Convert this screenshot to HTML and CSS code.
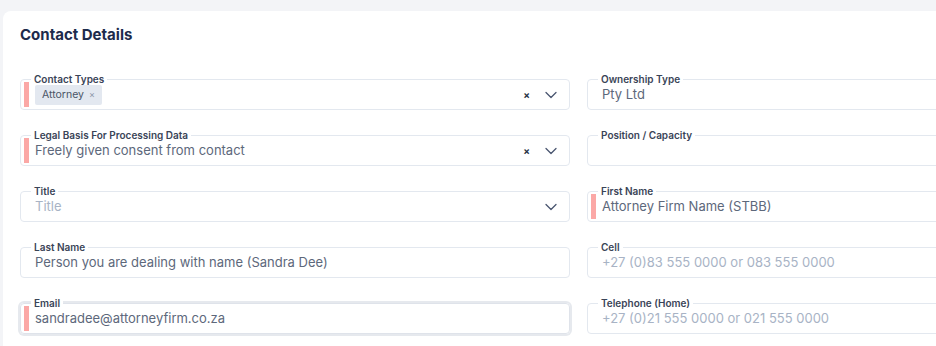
FILE: index.html
```html
<!DOCTYPE html>
<html lang="en">
<head>
    <meta charset="UTF-8">
    <meta name="viewport" content="width=device-width, initial-scale=1.0">
    <title>Contact Details</title>
    <link rel="stylesheet" href="styles.css">
</head>
<body>

    <!-- Contact details card -->
    <div class="card">
        <h2 class="card-title">Contact Details</h2>

        <div class="form-grid">
            <!-- Row 1 -->
            <div class="field required">
                <span class="field-label">Contact Types</span>
                <div class="field-value">
                    <span class="chip">Attorney <span class="chip-x">&times;</span></span>
                </div>
                <span class="clear">&times;</span>
                <svg class="chevron" width="12" height="8" viewBox="0 0 12 8"><path d="M1 1.5l5 5 5-5" fill="none" stroke="#4a5670" stroke-width="1.3" stroke-linecap="round" stroke-linejoin="round"/></svg>
            </div>
            <div class="field">
                <span class="field-label">Ownership Type</span>
                <div class="field-value">Pty Ltd</div>
            </div>

            <!-- Row 2 -->
            <div class="field required">
                <span class="field-label">Legal Basis For Processing Data</span>
                <div class="field-value">Freely given consent from contact</div>
                <span class="clear">&times;</span>
                <svg class="chevron" width="12" height="8" viewBox="0 0 12 8"><path d="M1 1.5l5 5 5-5" fill="none" stroke="#4a5670" stroke-width="1.3" stroke-linecap="round" stroke-linejoin="round"/></svg>
            </div>
            <div class="field">
                <span class="field-label">Position / Capacity</span>
                <div class="field-value"></div>
            </div>

            <!-- Row 3 -->
            <div class="field">
                <span class="field-label">Title</span>
                <div class="field-value placeholder">Title</div>
                <svg class="chevron" width="12" height="8" viewBox="0 0 12 8"><path d="M1 1.5l5 5 5-5" fill="none" stroke="#4a5670" stroke-width="1.3" stroke-linecap="round" stroke-linejoin="round"/></svg>
            </div>
            <div class="field required">
                <span class="field-label">First Name</span>
                <div class="field-value">Attorney Firm Name (STBB)</div>
            </div>

            <!-- Row 4 -->
            <div class="field">
                <span class="field-label">Last Name</span>
                <div class="field-value">Person you are dealing with name (Sandra Dee)</div>
            </div>
            <div class="field">
                <span class="field-label">Cell</span>
                <div class="field-value placeholder">+27 (0)83 555 0000 or 083 555 0000</div>
            </div>

            <!-- Row 5 -->
            <div class="field required focused">
                <span class="field-label">Email</span>
                <div class="field-value">sandradee@attorneyfirm.co.za</div>
            </div>
            <div class="field">
                <span class="field-label">Telephone (Home)</span>
                <div class="field-value placeholder">+27 (0)21 555 0000 or 021 555 0000</div>
            </div>
        </div>
    </div>

</body>
</html>
```

FILE: styles.css
```css
/* Reset */
* {
    margin: 0;
    padding: 0;
    box-sizing: border-box;
}

body {
    font-family: Inter, "Noto Sans", sans-serif;
    background-color: #f3f4f7;
    height: 100vh;
    overflow: hidden;
}

/* Card runs off the right and bottom of the view */
.card {
    background-color: #fff;
    margin: 11px 0 0 3px;
    padding: 14px 0 0 17px;
    border-radius: 8px 0 0 0;
    height: calc(100vh - 11px);
    overflow: hidden;
}

.card-title {
    font-size: 15px;
    line-height: 20px;
    font-weight: 700;
    color: #1d2b4c;
}

/* Two column form grid */
.form-grid {
    display: grid;
    grid-template-columns: 550px 1fr;
    column-gap: 17px;
    row-gap: 25px;
    margin: 34px -20px 0 0;
}

.field {
    position: relative;
    height: 31px;
    border: 1px solid #e3e8ef;
    border-radius: 4px;
    display: flex;
    align-items: center;
    padding-left: 14px;
}

.field.focused {
    border-color: #dfe3ea;
    box-shadow: 0 0 0 2px #e6e9ee;
}

/* Label sitting on the top border */
.field-label {
    position: absolute;
    top: -7px;
    left: 10px;
    padding: 0 3px;
    background-color: #fff;
    font-size: 10px;
    line-height: 12px;
    font-weight: 600;
    color: #3a4457;
}

/* Red marker for required fields */
.field.required::before {
    content: "";
    position: absolute;
    left: 3px;
    top: 2px;
    bottom: 2px;
    width: 5px;
    background-color: #fba8a6;
}

.field-value {
    flex-grow: 1;
    font-size: 13px;
    line-height: 16px;
    margin-top: -1px;
    color: #5d687b;
    white-space: nowrap;
}

.field-value.placeholder {
    color: #a8b3c5;
}

.chip {
    display: inline-flex;
    align-items: center;
    gap: 5px;
    margin-top: 1px;
    background-color: #e3e8f0;
    color: #4a5466;
    font-size: 10.5px;
    height: 20px;
    padding: 0 7px;
    border-radius: 2px;
}

.chip-x {
    color: #8c96a8;
    font-size: 9px;
}

.clear {
    font-size: 10px;
    font-weight: 700;
    color: #2a3346;
    margin-right: 15px;
}

.chevron {
    margin-right: 12px;
}
```
